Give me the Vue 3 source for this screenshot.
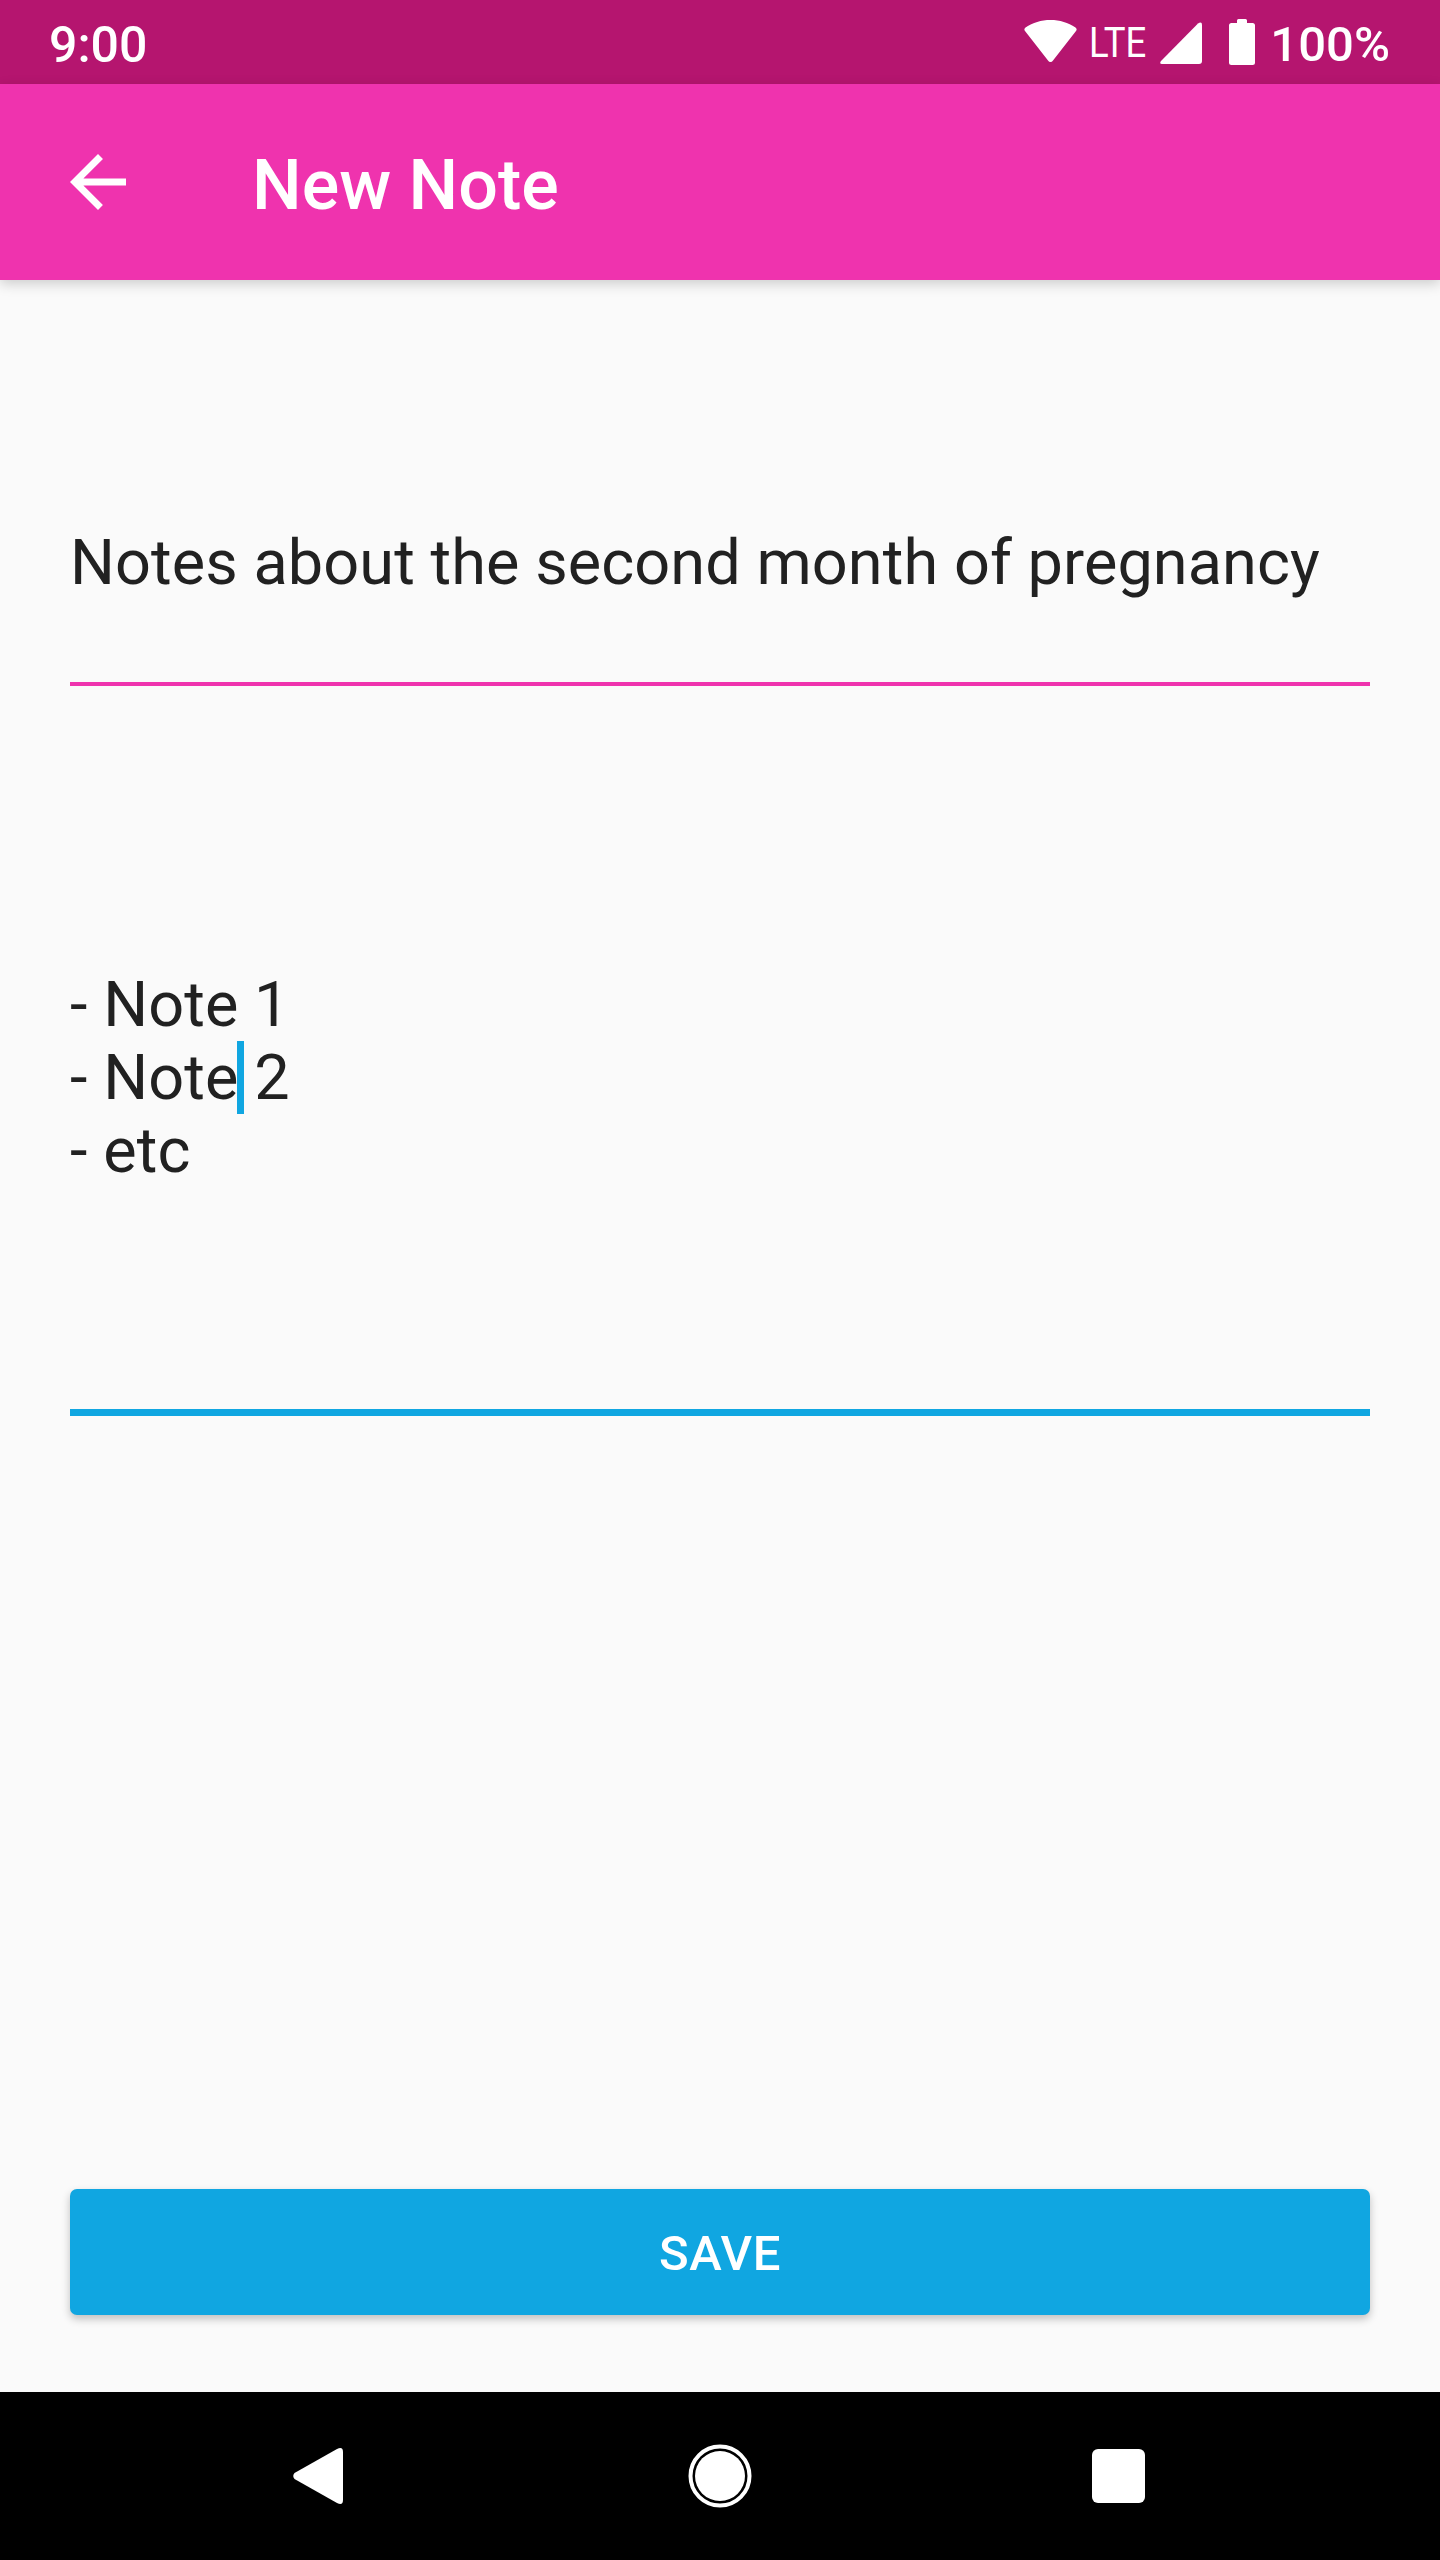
<script setup>
</script>

<template>
  <div class="screen">
    <div class="status">
      <span class="time">9:00</span>
      <div class="status-right">
        <svg class="wifi" viewBox="0 0 53 42"><path d="M26.500 42 Q25 42 24 40.500 L1 11 Q-.5 9 1.500 7.500 C9 2.500 17 0 26.500 0 C36 0 44 2.500 51.500 7.500 Q53.500 9 52 11 L29 40.500 Q28 42 26.500 42 Z" fill="#fff"/></svg>
        <span class="lte">LTE</span>
        <svg class="signal" viewBox="0 0 42 42"><path d="M1 39 L38 1.500 Q42 -1 42 3 V39 Q42 42 39 42 H2 Q-1 42 1 39 Z" fill="#fff"/></svg>
        <svg class="battery" viewBox="0 0 26 46"><path d="M8 1.500 Q8 0 9.500 0 H16.500 Q18 0 18 1.500 V4 H23.500 Q26 4 26 6.500 V43.500 Q26 46 23.500 46 H2.500 Q0 46 0 43.500 V6.500 Q0 4 2.500 4 H8 Z" fill="#fff"/></svg>
        <span class="pct">100%</span>
      </div>
    </div>
    <div class="appbar">
      <svg class="back" viewBox="0 0 24 24"><path d="M20 11H7.830l5.590-5.590L12 4l-8 8 8 8 1.410-1.410L7.830 13H20v-2z" fill="#fff"/></svg>
      <span class="title">New Note</span>
    </div>
    <div class="body">
      <div class="field title-field">
        <div class="title-text">Notes about the second month of pregnancy</div>
      </div>
      <div class="field note-field">
        <div class="note-line">- Note 1</div>
        <div class="note-line">- Note<span class="caret"></span> 2</div>
        <div class="note-line">- etc</div>
      </div>
      <div class="spacer"></div>
      <button class="save">SAVE</button>
    </div>
    <div class="nav">
      <svg class="nav-back" viewBox="0 0 50 56"><path d="M1.500 31 Q-1 28 1.500 25 L44 1 Q50 -2 50 4 V52 Q50 58 44 55 Z" fill="#fff"/></svg>
      <svg class="nav-home" viewBox="0 0 64 64"><circle cx="32" cy="32" r="29.500" fill="none" stroke="#fff" stroke-width="4"/><circle cx="32" cy="32" r="25" fill="#fff"/></svg>
      <div class="nav-square"></div>
    </div>
  </div>
</template>

<style scoped>
.screen {
  width: 1440px;
  height: 2560px;
  background: #fafafa;
  display: flex;
  flex-direction: column;
  font-family: Roboto, "Liberation Sans", sans-serif;
  color: #212121;
  overflow: hidden;
}
.status {
  height: 84px;
  background: #b5156f;
  display: flex;
  align-items: center;
  justify-content: space-between;
  padding: 0 50px 0 49px;
  color: #fff;
  font-size: 50px;
  font-weight: 500;
}
.time { padding-top: 5px; }
.status-right { display: flex; align-items: center; }
.wifi { width: 53px; height: 42px; margin-bottom: 3px; }
.lte {
  display: inline-block;
  font-size: 43px;
  font-weight: 400;
  width: 61px;
  margin-left: 12px;
  transform: scaleX(.85);
  transform-origin: left center;
  white-space: nowrap;
}
.signal { width: 42px; height: 42px; margin-left: 10px; margin-top: 2px; }
.battery { width: 26px; height: 46px; margin-left: 27px; }
.pct { margin-left: 15px; font-size: 49px; padding-top: 5px; }
.appbar {
  height: 196px;
  background: #ef33ae;
  display: flex;
  align-items: center;
  padding-left: 56px;
  box-shadow: 0 4px 12px rgba(0,0,0,.18);
  position: relative;
}
.back { width: 84px; height: 84px; }
.title { color: #fff; font-size: 70px; font-weight: 500; margin-left: 112px; padding-top: 6px; }
.body {
  flex: 1;
  display: flex;
  flex-direction: column;
  padding: 0 70px 77px;
}
.field { display: flex; flex-direction: column; }
.title-field {
  margin-top: 246px;
  height: 156px;
  border-bottom: 4px solid #ef33ae;
}
.title-text { font-size: 63px; line-height: 73px; letter-spacing: .08px; }
.note-field {
  margin-top: 282px;
  height: 441px;
  border-bottom: 7px solid #10a6e1;
}
.note-line { font-size: 63px; line-height: 73px; letter-spacing: .08px; }
.caret {
  display: inline-block;
  width: 7px;
  height: 73px;
  background: #10a6e1;
  vertical-align: -15px;
  margin-left: -1px;
  margin-right: -6px;
}
.spacer { flex: 1; }
.save {
  height: 126px;
  padding: 2px 0 0;
  border: 0;
  border-radius: 7px;
  background: #10a6e1;
  color: #fff;
  font-family: inherit;
  font-size: 49px;
  font-weight: 500;
  letter-spacing: .6px;
  box-shadow: 0 4px 9px rgba(0,0,0,.24);
}
.nav {
  height: 168px;
  background: #000;
  display: flex;
  align-items: center;
  position: relative;
  padding-left: 293px;
}
.nav-back { width: 50px; height: 56px; }
.nav-home { width: 64px; height: 64px; margin-left: 345px; }
.nav-square { width: 53px; height: 54px; background: #fff; border-radius: 6px; margin-left: 340px; }
</style>
